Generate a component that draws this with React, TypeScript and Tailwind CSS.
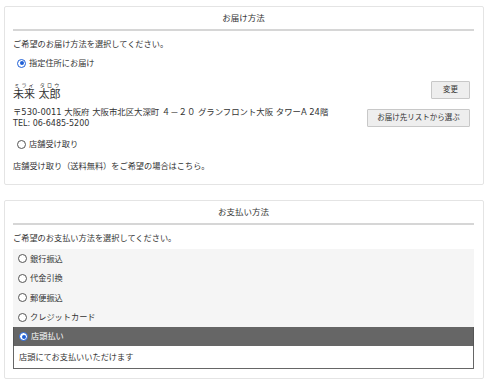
import React from "react";

const jp = { fontFamily: '"DejaVu Sans", "Noto Sans CJK JP", sans-serif' };

function Radio({ checked }: { checked?: boolean }) {
  return checked ? (
    <span className="inline-flex w-[9px] h-[9px] rounded-full border-[1.5px] border-[#1f5fd6] bg-white items-center justify-center shrink-0">
      <span className="w-[4px] h-[4px] rounded-full bg-[#1f5fd6]" />
    </span>
  ) : (
    <span className="inline-block w-[9px] h-[9px] rounded-full border border-[#555] bg-white shrink-0" />
  );
}

function SectionTitle({ children }: { children: React.ReactNode }) {
  return (
    <div className="h-[24px] flex items-end justify-center pb-[4px] border-b-2 border-[#d6d6d6] text-[8.5px] text-[#333]">
      {children}
    </div>
  );
}

export default function App() {
  const methods = ["銀行振込", "代金引換", "郵便振込", "クレジットカード"];

  return (
    <div className="w-[490px] h-[386px] bg-white text-[#333] pt-[6px] pl-[4px]" style={jp}>
      {/* お届け方法 */}
      <div className="w-[480px] h-[179px] border border-[#e4e4e4] rounded-[2px] pl-[8px] pr-[9px]">
        <SectionTitle>お届け方法</SectionTitle>
        <p className="text-[8.2px] mt-[7px] leading-[12px]">ご希望のお届け方法を選択してください。</p>
        <label className="flex items-center gap-[3px] mt-[7px] pl-[4px] h-[12px] text-[8.2px]">
          <Radio checked />
          <span>指定住所にお届け</span>
        </label>

        <div className="flex justify-between mt-[7px]">
          <div className="pt-[6px]">
            <div className="text-[11px] leading-[14px]">
              <ruby>
                未来<rt className="text-[5px] leading-[6px]">ミライ</rt>
              </ruby>{" "}
              <ruby>
                太郎<rt className="text-[5px] leading-[6px]">タロウ</rt>
              </ruby>
            </div>
            <p className="text-[8.4px] leading-[12px] mt-[4px]">
              〒530-0011 大阪府 大阪市北区大深町 ４－２０ グランフロント大阪 タワーA 24階
            </p>
            <p className="text-[8px] leading-[12px]">TEL: 06-6485-5200</p>
          </div>
          <div className="flex flex-col items-end gap-[10px] pr-[4px] pt-[5px]">
            <button className="w-[39px] h-[18px] bg-[#eeeeee] border border-[#c8c8c8] rounded-[1px] text-[7.5px] text-[#333]">
              変更
            </button>
            <button className="w-[103px] h-[18px] bg-[#eeeeee] border border-[#c8c8c8] rounded-[1px] text-[7.5px] text-[#333]">
              お届け先リストから選ぶ
            </button>
          </div>
        </div>

        <label className="flex items-center gap-[3px] mt-[8px] pl-[4px] h-[12px] text-[8.2px]">
          <Radio />
          <span>店舗受け取り</span>
        </label>
        <p className="text-[8.2px] leading-[12px] mt-[10px]">店舗受け取り（送料無料）をご希望の場合はこちら。</p>
      </div>

      {/* お支払い方法 */}
      <div className="w-[480px] h-[179px] mt-[15px] border border-[#e4e4e4] rounded-[2px] pl-[8px] pr-[9px]">
        <SectionTitle>お支払い方法</SectionTitle>
        <p className="text-[8.2px] mt-[7px] leading-[12px]">ご希望のお支払い方法を選択してください。</p>
        <div className="mt-[5px] bg-[#f5f5f5]">
          {methods.map((m) => (
            <label key={m} className="flex items-center gap-[3px] h-[19.5px] pl-[5px] text-[8.2px]">
              <Radio />
              <span>{m}</span>
            </label>
          ))}
        </div>
        <label className="flex items-center gap-[3px] h-[19px] pl-[5px] bg-[#666666] text-white text-[8.2px] border-x border-[#555]">
          <Radio checked />
          <span>店頭払い</span>
        </label>
        <div className="h-[23px] flex items-center pl-[5px] bg-white border border-t-0 border-[#666] text-[8.2px]">
          店頭にてお支払いいただけます
        </div>
      </div>
    </div>
  );
}
